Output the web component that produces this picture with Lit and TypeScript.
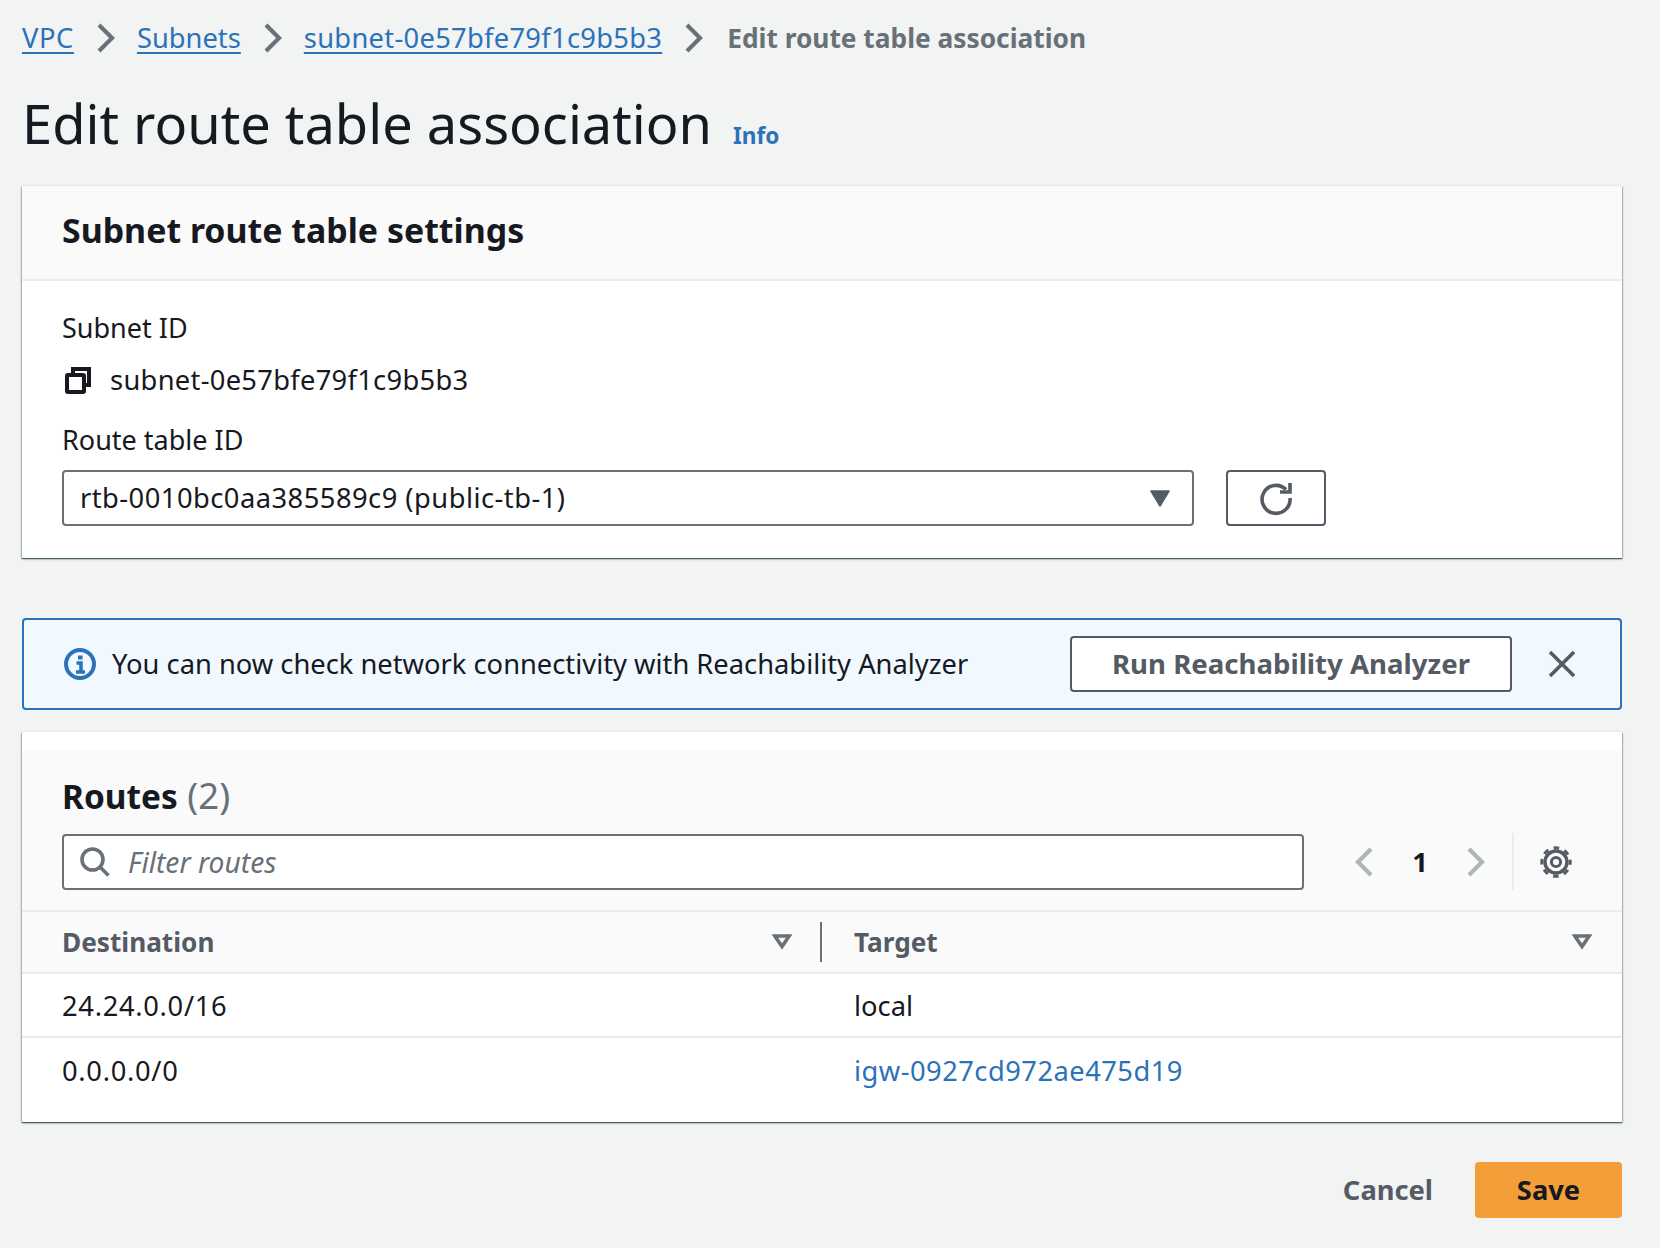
import { LitElement, html, css, svg } from 'lit';
import { customElement } from 'lit/decorators.js';

const chevron = (left = false) => html`
  <svg class="chev" viewBox="0 0 18 30" fill="none" stroke="currentColor" stroke-width="4.2">
    <path d=${left ? 'M16 2 L3 15 L16 28' : 'M2 2 L15 15 L2 28'} stroke-linejoin="miter"></path>
  </svg>`;

const filterCaret = html`
  <svg class="sort" viewBox="0 0 20 16" fill="none" stroke="currentColor" stroke-width="3.6" stroke-linejoin="miter">
    <path d="M2.8 2 H17.2 L10 12.6 Z"></path>
  </svg>`;

@customElement('app-root')
export class AppRoot extends LitElement {
  static styles = css`
    :host {
      display: block;
      min-height: 1248px;
      background: #f2f3f3;
      font-family: 'Noto Sans', 'Open Sans', sans-serif;
      font-size: 27.3px;
      line-height: 40px;
      color: #16191f;
    }
    .page { padding: 14px 38px 30px 22px; }
    a { color: #2c72b8; }
    svg { display: block; flex: none; }
    .id { letter-spacing: 0.3px; }
    .id-wide { letter-spacing: 0.48px; }
    .ip { letter-spacing: 0.7px; }
    .label { font-size: 27px; }

    .crumbs { display: flex; align-items: center; height: 48px; }
    .crumbs a { text-underline-offset: 4px; }
    .crumbs .vpc { letter-spacing: 0.6px; }
    .crumbs .chev { width: 18px; height: 30px; margin: 0 22px 0 23px; color: #687078; }
    .crumbs .here { color: #687078; font-weight: 700; font-size: 26.3px; margin-left: 2px; }

    .title { display: flex; align-items: baseline; margin-top: 25px; height: 72px; }
    h1 { margin: 0; font-size: 54.2px; line-height: 72px; font-weight: 400; }
    .info { margin-left: 21px; font-size: 22.6px; font-weight: 700; text-decoration: none; }

    .card {
      background: #fff;
      box-shadow: 0 1px 1px 0 rgba(0, 28, 36, 0.5), 0 1px 3px 0 rgba(0, 28, 36, 0.25),
        1px 1px 1px 0 rgba(0, 28, 36, 0.12), -1px 1px 1px 0 rgba(0, 28, 36, 0.12);
    }
    .settings { margin-top: 27px; }
    .card-head {
      height: 95px;
      box-sizing: border-box;
      display: flex;
      align-items: center;
      padding: 0 0 5px 40px;
      background: #fafafa;
      border-bottom: 2px solid #eaeded;
    }
    h2 { margin: 0; font-size: 33.9px; line-height: 44px; font-weight: 700; }
    .card-body { padding: 27px 40px 32px; }
    .copy-row { display: flex; align-items: center; gap: 18px; margin-top: 12px; padding-left: 2px; }
    .copy-row svg { width: 28px; height: 28px; }
    .label-route { margin: 20px 0 10px; }
    .select-row { display: flex; gap: 32px; }
    .select {
      width: 1132px;
      height: 56px;
      box-sizing: border-box;
      border: 2px solid #687078;
      border-radius: 4px;
      display: flex;
      align-items: center;
      justify-content: space-between;
      padding: 0 22px 0 16px;
    }
    .select svg { width: 20px; height: 17px; color: #545b64; }
    .refresh {
      width: 100px;
      height: 56px;
      box-sizing: border-box;
      border: 2px solid #545b64;
      border-radius: 4px;
      display: flex;
      align-items: center;
      justify-content: center;
    }
    .refresh svg { width: 36px; height: 36px; color: #545b64; }

    .alert {
      margin-top: 60px;
      height: 92px;
      box-sizing: border-box;
      border: 2px solid #2c72b8;
      border-radius: 4px;
      background: #f1f8ff;
      display: flex;
      align-items: center;
      padding: 0 0 0 40px;
    }
    .alert .i { width: 32px; height: 32px; color: #2c72b8; }
    .alert .msg { margin-left: 16px; flex: 1; }
    .btn {
      box-sizing: border-box;
      height: 56px;
      width: 442px;
      border: 2px solid #545b64;
      border-radius: 4px;
      background: #fff;
      color: #545b64;
      font-weight: 700;
      font-size: 27.6px;
      display: flex;
      align-items: center;
      justify-content: center;
      padding-bottom: 2px;
    }
    .alert .x { width: 28px; height: 28px; margin: 0 44px 0 36px; color: #545b64; }

    .routes { margin-top: 22px; padding-top: 18px; padding-bottom: 20px; }
    .tools { background: #fafafa; padding: 21px 0 20px 40px; border-bottom: 2px solid #eaeded; }
    .routes h2 { line-height: 48px; height: 50px; font-size: 33.4px; }
    .routes h2 span { font-weight: 400; color: #687078; font-size: 36.5px; margin-left: 1px; }
    .tool-row { display: flex; align-items: center; margin-top: 12px; }
    .search {
      width: 1242px;
      height: 56px;
      box-sizing: border-box;
      border: 2px solid #687078;
      border-radius: 4px;
      background: #fff;
      display: flex;
      align-items: center;
      padding: 1px 0 0 16px;
      font-style: italic;
      font-size: 28.2px;
      color: #687078;
    }
    .search svg { width: 30px; height: 30px; margin-right: 18px; }
    .pager { display: flex; align-items: center; margin-left: 51px; color: #aab7b8; }
    .pager .chev { width: 18px; height: 30px; }
    .pager b { width: 94px; text-align: center; color: #16191f; font-weight: 700; }
    .split { width: 2px; height: 57px; background: #eaeded; margin: 0 26px 0 27px; }
    .gear { width: 32px; height: 32px; color: #545b64; }

    .row {
      display: grid;
      grid-template-columns: 800px 1fr;
      height: 64px;
      align-items: center;
      border-bottom: 2px solid #eaeded;
      box-sizing: border-box;
      padding-top: 2px;
    }
    .row:last-child { border-bottom: 0; }
    .row > div { padding-left: 40px; }
    .row > div + div { padding-left: 32px; }
    .row a { text-decoration: none; }
    .head { background: #fafafa; height: 62px; color: #545b64; font-weight: 700; font-size: 26.2px; padding-top: 0; }
    .head > div { display: flex; align-items: center; height: 40px; }
    .head > div:first-child { border-right: 2px solid #687078; padding-right: 28px; }
    .head > div + div { padding-right: 30px; }
    .head span { flex: 1; }
    .head .sort { width: 20px; height: 16px; color: #687078; }

    .footer { display: flex; justify-content: flex-end; align-items: center; margin-top: 40px; }
    .cancel { color: #545b64; font-weight: 700; margin-right: 42px; }
    .save {
      width: 147px;
      height: 56px;
      border-radius: 4px;
      background: #f39e38;
      font-weight: 700;
      display: flex;
      align-items: center;
      justify-content: center;
    }
  `;

  render() {
    return html`
      <div class="page">
        <nav class="crumbs">
          <a class="vpc" href="#">VPC</a>${chevron()}
          <a href="#">Subnets</a>${chevron()}
          <a class="id" href="#">subnet-0e57bfe79f1c9b5b3</a>${chevron()}
          <span class="here">Edit route table association</span>
        </nav>

        <div class="title">
          <h1>Edit route table association</h1>
          <a class="info" href="#">Info</a>
        </div>

        <section class="card settings">
          <div class="card-head"><h2>Subnet route table settings</h2></div>
          <div class="card-body">
            <div class="label">Subnet ID</div>
            <div class="copy-row">
              <svg viewBox="0 0 28 28" fill="none" stroke="currentColor" stroke-width="4">
                <path d="M9 8 V3 H25 V19 H20"></path>
                <rect x="3" y="9" width="17" height="17" rx="1"></rect>
              </svg>
              <span class="id">subnet-0e57bfe79f1c9b5b3</span>
            </div>
            <div class="label label-route">Route table ID</div>
            <div class="select-row">
              <div class="select">
                <span class="id-wide">rtb-0010bc0aa385589c9 (public-tb-1)</span>
                <svg viewBox="0 0 20 17" fill="currentColor"><path d="M1 1 H19 L10 16 Z" stroke="currentColor" stroke-width="1.5" stroke-linejoin="round"></path></svg>
              </div>
              <div class="refresh">
                <svg viewBox="0 0 36 36" fill="none" stroke="currentColor" stroke-width="3.6">
                  <path d="M28 9.5 A14 14 0 1 0 32 18"></path>
                  <path d="M32 3 V12 H22"></path>
                </svg>
              </div>
            </div>
          </div>
        </section>

        <div class="alert">
          <svg class="i" viewBox="0 0 32 32" fill="none" stroke="currentColor" stroke-width="4">
            <circle cx="16" cy="16" r="14"></circle>
            <path d="M12.5 15 H17 V24 M12 24 H21" stroke-width="3.6"></path>
            <path d="M14 7.5 H18.6 V11.5 H14 Z" fill="currentColor" stroke="none"></path>
          </svg>
          <span class="msg">You can now check network connectivity with Reachability Analyzer</span>
          <div class="btn">Run Reachability Analyzer</div>
          <svg class="x" viewBox="0 0 28 28" fill="none" stroke="currentColor" stroke-width="3.6">
            <path d="M2 2 L26 26 M26 2 L2 26"></path>
          </svg>
        </div>

        <section class="card routes">
          <div class="tools">
            <h2>Routes <span>(2)</span></h2>
            <div class="tool-row">
              <div class="search">
                <svg viewBox="0 0 30 30" fill="none" stroke="#687078" stroke-width="3.6">
                  <circle cx="12.5" cy="12.5" r="10.5"></circle>
                  <path d="M20 20 L28.5 28.5"></path>
                </svg>
                Filter routes
              </div>
              <div class="pager">
                ${chevron(true)}
                <b>1</b>
                ${chevron()}
                <div class="split"></div>
                <svg class="gear" viewBox="0 0 32 32" fill="none" stroke="currentColor">
                  ${svg`<circle cx="16" cy="16" r="11" stroke-width="3.4"></circle>
                  <circle cx="16" cy="16" r="14.2" stroke-width="3" stroke-dasharray="5.6 5.55" stroke-dashoffset="2.8"></circle>
                  <circle cx="16" cy="16" r="4.6" stroke-width="3"></circle>`}
                </svg>
              </div>
            </div>
          </div>
          <div class="row head">
            <div><span>Destination</span>${filterCaret}</div>
            <div><span>Target</span>${filterCaret}</div>
          </div>
          <div class="row"><div class="ip">24.24.0.0/16</div><div>local</div></div>
          <div class="row"><div class="ip">0.0.0.0/0</div><div><a class="id-wide" href="#">igw-0927cd972ae475d19</a></div></div>
        </section>

        <div class="footer">
          <span class="cancel">Cancel</span>
          <div class="save">Save</div>
        </div>
      </div>
    `;
  }
}
